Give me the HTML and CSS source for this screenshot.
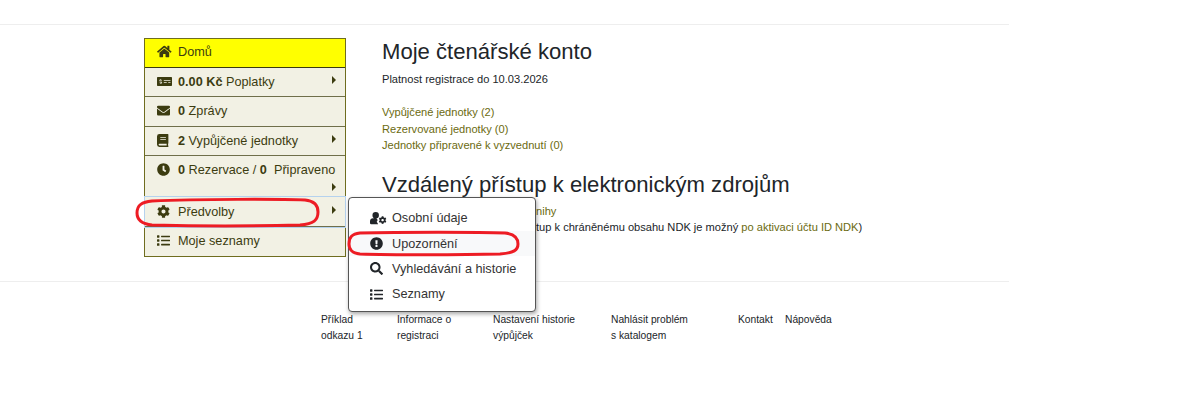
FILE: index.html
```html
<!DOCTYPE html>
<html lang="cs">
<head>
<meta charset="utf-8">
<title>Moje čtenářské konto</title>
<link rel="stylesheet" href="styles.css">
</head>
<body>
<div class="page">
  <hr class="rule top-rule">
  <main class="main">
    <nav class="side">
      <a class="item active"><svg class="ic" viewBox="0 0 576 512" preserveAspectRatio="xMinYMid meet"><path d="M280.400 148.300 96 300.100V464a16 16 0 0 0 16 16l112-.3a16 16 0 0 0 16-16V368a16 16 0 0 1 16-16h64a16 16 0 0 1 16 16v95.600a16 16 0 0 0 16 16.100L464 480a16 16 0 0 0 16-16V300L295.700 148.300a12.200 12.200 0 0 0-15.300 0zM571.600 251.500 488 182.600V44a12 12 0 0 0-12-12h-56a12 12 0 0 0-12 12v72.600L318.500 43a48 48 0 0 0-61 0L4.300 251.500a12 12 0 0 0-1.600 16.900l25.500 31a12 12 0 0 0 16.900 1.600l235.200-193.700a12.200 12.200 0 0 1 15.300 0L530.900 301a12 12 0 0 0 16.900-1.600l25.500-31a12 12 0 0 0-1.700-16.900z"/></svg><span>Domů</span></a>
      <a class="item has-sub"><svg class="ic" viewBox="0 0 640 512" preserveAspectRatio="xMinYMid meet"><path d="M608 64H32A32 32 0 0 0 0 96v320a32 32 0 0 0 32 32h576a32 32 0 0 0 32-32V96a32 32 0 0 0-32-32zM176 327.900V344a8 8 0 0 1-8 8h-16a8 8 0 0 1-8-8v-16.300a57 57 0 0 1-31.400-11.400 8 8 0 0 1-.6-12.100l11.800-11.200a8.200 8.200 0 0 1 10.100-.7 24 24 0 0 0 12.800 3.700h28.100c6.500 0 11.800-5.900 11.800-13.200 0-6-3.600-11.200-8.800-12.800l-45-13.500c-18.600-5.600-31.600-23.400-31.600-43.400 0-24.500 19-44.400 42.600-45V168a8 8 0 0 1 8-8h16a8 8 0 0 1 8 8v16.300a57 57 0 0 1 31.400 11.400 8 8 0 0 1 .6 12.100l-11.800 11.200a8.200 8.200 0 0 1-10.100.7 24 24 0 0 0-12.800-3.700h-28.100c-6.500 0-11.800 5.900-11.800 13.200 0 6 3.600 11.200 8.800 12.800l45 13.500c18.600 5.600 31.600 23.400 31.600 43.400 0 24.500-19 44.400-42.600 45zM416 312a8 8 0 0 1-8 8H296a8 8 0 0 1-8-8v-16a8 8 0 0 1 8-8h112a8 8 0 0 1 8 8zm160 0a8 8 0 0 1-8 8h-80a8 8 0 0 1-8-8v-16a8 8 0 0 1 8-8h80a8 8 0 0 1 8 8zm0-96a8 8 0 0 1-8 8H296a8 8 0 0 1-8-8v-16a8 8 0 0 1 8-8h272a8 8 0 0 1 8 8z"/></svg><span><b>0.00 Kč</b> Poplatky</span></a>
      <a class="item wide"><svg class="ic" viewBox="0 0 512 512" preserveAspectRatio="xMinYMid meet"><path d="M502.300 190.800a6 6 0 0 1 9.700 4.700V400a48 48 0 0 1-48 48H48a48 48 0 0 1-48-48V195.600a6 6 0 0 1 9.700-4.700c22.400 17.400 52.100 39.500 154.100 113.600 21.100 15.400 56.700 47.800 92.200 47.600 35.700.3 72-32.800 92.300-47.600 102-74.100 131.600-96.300 154-113.700zM256 320c23.200.4 56.600-29.200 73.400-41.400 132.700-96.300 142.800-104.700 173.400-128.700a24 24 0 0 0 9.200-18.900v-19a48 48 0 0 0-48-48H48a48 48 0 0 0-48 48v19a24 24 0 0 0 9.200 18.900c30.600 23.900 40.700 32.400 173.400 128.700 16.800 12.200 50.200 41.800 73.400 41.400z"/></svg><span><b>0</b> Zprávy</span></a>
      <a class="item has-sub"><svg class="ic" viewBox="0 0 448 512" preserveAspectRatio="xMinYMid meet"><path d="M448 360V24a24 24 0 0 0-24-24H96A96 96 0 0 0 0 96v320a96 96 0 0 0 96 96h328a24 24 0 0 0 24-24v-16c0-7.500-3.500-14.300-8.900-18.700-4.200-15.400-4.200-59.300 0-74.700 5.400-4.300 8.900-11.100 8.900-18.600zM128 134a6 6 0 0 1 6-6h212a6 6 0 0 1 6 6v20a6 6 0 0 1-6 6H134a6 6 0 0 1-6-6zm0 64a6 6 0 0 1 6-6h212a6 6 0 0 1 6 6v20a6 6 0 0 1-6 6H134a6 6 0 0 1-6-6zm253.400 250H96a32 32 0 0 1 0-64h285.400c-1.900 17.100-1.900 46.900 0 64z"/></svg><span><b>2</b> Vypůjčené jednotky</span></a>
      <a class="item tall has-sub"><svg class="ic" viewBox="0 0 512 512" preserveAspectRatio="xMinYMid meet"><path d="M256 8C119 8 8 119 8 256s111 248 248 248 248-111 248-248S393 8 256 8zm57.100 350.100L224.900 294a12 12 0 0 1-4.900-9.700V116a12 12 0 0 1 12-12h48a12 12 0 0 1 12 12v137.700l63.500 46.200a12 12 0 0 1 2.600 16.800l-28.200 38.800a12.100 12.100 0 0 1-16.800 2.600z"/></svg><span><b>0</b> Rezervace / <b>0</b>&nbsp; Připraveno</span></a>
      <a class="item wide has-sub focus"><svg class="ic" viewBox="0 0 512 512" preserveAspectRatio="xMinYMid meet"><path d="M487.400 315.700l-42.600-24.600c4.300-23.200 4.300-47 0-70.200l42.600-24.600c4.900-2.800 7.100-8.600 5.500-14-11.100-35.600-30-67.800-54.700-94.600-3.800-4.100-10-5.100-14.800-2.300L380.800 110c-17.900-15.400-38.500-27.300-60.800-35.100V25.800c0-5.600-3.900-10.500-9.400-11.700-36.700-8.200-74.300-7.800-109.200 0-5.500 1.200-9.400 6.100-9.400 11.700V75c-22.200 7.900-42.800 19.800-60.800 35.100L88.700 85.500c-4.900-2.800-11-1.900-14.800 2.300-24.700 26.700-43.600 58.900-54.700 94.600-1.700 5.400.6 11.200 5.500 14L67.300 221c-4.300 23.200-4.300 47 0 70.200l-42.600 24.600c-4.900 2.800-7.100 8.600-5.500 14 11.100 35.600 30 67.800 54.700 94.600 3.800 4.100 10 5.100 14.800 2.300l42.600-24.600c17.900 15.400 38.500 27.300 60.800 35.100v49.200c0 5.600 3.900 10.500 9.400 11.700 36.700 8.200 74.300 7.800 109.200 0 5.500-1.200 9.400-6.100 9.400-11.700v-49.200c22.200-7.900 42.800-19.800 60.800-35.100l42.600 24.600c4.900 2.800 11 1.900 14.800-2.300 24.700-26.700 43.600-58.900 54.700-94.600 1.500-5.500-.7-11.300-5.600-14.100zM256 336c-44.100 0-80-35.900-80-80s35.900-80 80-80 80 35.900 80 80-35.900 80-80 80z"/></svg><span>Předvolby</span></a>
      <a class="item"><svg class="ic" viewBox="0 0 512 512" preserveAspectRatio="xMinYMid meet"><path d="M80 368H16a16 16 0 0 0-16 16v64a16 16 0 0 0 16 16h64a16 16 0 0 0 16-16v-64a16 16 0 0 0-16-16zm0-320H16A16 16 0 0 0 0 64v64a16 16 0 0 0 16 16h64a16 16 0 0 0 16-16V64a16 16 0 0 0-16-16zm0 160H16a16 16 0 0 0-16 16v64a16 16 0 0 0 16 16h64a16 16 0 0 0 16-16v-64a16 16 0 0 0-16-16zm416 176H176a16 16 0 0 0-16 16v32a16 16 0 0 0 16 16h320a16 16 0 0 0 16-16v-32a16 16 0 0 0-16-16zm0-320H176a16 16 0 0 0-16 16v32a16 16 0 0 0 16 16h320a16 16 0 0 0 16-16V80a16 16 0 0 0-16-16zm0 160H176a16 16 0 0 0-16 16v32a16 16 0 0 0 16 16h320a16 16 0 0 0 16-16v-32a16 16 0 0 0-16-16z"/></svg><span>Moje seznamy</span></a>
    </nav>
    <section class="content">
      <h1>Moje čtenářské konto</h1>
      <p class="valid">Platnost registrace do 10.03.2026</p>
      <ul class="links">
        <li><a>Vypůjčené jednotky (2)</a></li>
        <li><a>Rezervované jednotky (0)</a></li>
        <li><a>Jednotky připravené k vyzvednutí (0)</a></li>
      </ul>
      <h1 class="second">Vzdálený přístup k elektronickým zdrojům</h1>
      <ul class="links remote">
        <li><a>nihy</a></li>
        <li>tup k chráněnému obsahu NDK je možný <a>po aktivaci účtu ID NDK</a>)</li>
      </ul>
    </section>
  </main>
  <hr class="rule foot-rule">
  <footer class="foot">
    <a class="f1">Příklad<br>odkazu 1</a>
    <a class="f2">Informace o<br>registraci</a>
    <a class="f3">Nastavení historie<br>výpůjček</a>
    <a class="f4">Nahlásit problém<br>s katalogem</a>
    <a class="f5">Kontakt</a>
    <a class="f6">Nápověda</a>
  </footer>

  <div class="menu">
    <a class="mi"><svg class="mic" viewBox="0 0 640 512" preserveAspectRatio="xMinYMid meet"><path d="M224 256a128 128 0 1 0 0-256 128 128 0 0 0 0 256zM610.500 341.300c2.600-14.100 2.600-28.500 0-42.600l25.800-14.900c3-1.700 4.300-5.200 3.300-8.500-6.700-21.600-18.200-41.200-33.200-57.400-2.300-2.500-6-3.100-9-1.400l-25.800 14.900c-10.900-9.300-23.400-16.500-36.900-21.300v-29.800c0-3.400-2.400-6.400-5.700-7.100-22.300-5-45-4.800-66.200 0-3.300.7-5.700 3.700-5.700 7.100v29.800c-13.500 4.800-26 12-36.900 21.300l-25.800-14.900c-2.900-1.700-6.700-1.100-9 1.400-15 16.200-26.500 35.800-33.200 57.400-1 3.300.4 6.800 3.300 8.500l25.800 14.900c-2.600 14.100-2.600 28.500 0 42.600l-25.800 14.900c-3 1.700-4.300 5.200-3.300 8.500 6.700 21.600 18.200 41.100 33.200 57.400 2.300 2.500 6 3.100 9 1.400l25.800-14.900c10.900 9.300 23.400 16.500 36.900 21.300v29.800c0 3.400 2.400 6.400 5.700 7.100 22.300 5 45 4.800 66.200 0 3.300-.7 5.700-3.700 5.700-7.100v-29.800c13.500-4.800 26-12 36.900-21.300l25.800 14.900c2.900 1.700 6.700 1.100 9-1.400 15-16.200 26.500-35.800 33.200-57.400 1-3.300-.4-6.800-3.300-8.500zM496 368.500c-26.800 0-48.500-21.800-48.500-48.500s21.800-48.500 48.500-48.500 48.500 21.800 48.500 48.500-21.700 48.500-48.500 48.500zM317.400 480c-1.300-2.200-2.400-4.600-3.200-7.100-8.100-26.100-22-50.500-40.200-70.200-8.600-9.300-9.500-23.100-3.500-33.900L294 352c-4.700-14.100-4.700-49.900 0-64l-12-7c-10.200-5.900-16.800-16.200-17.500-27.800-12.700-6.200-26.800-9.200-40.500-9.200h-16.700a174 174 0 0 1-74.600 0H116C52 244 0 296 0 360v72a48 48 0 0 0 48 48z"/></svg><span>Osobní údaje</span></a>
    <a class="mi hover"><svg class="mic" viewBox="0 0 512 512" preserveAspectRatio="xMinYMid meet"><path d="M504 256c0 137-111 248-248 248S8 393 8 256 119 8 256 8s248 111 248 248zm-248 50a46 46 0 1 0 0 92 46 46 0 0 0 0-92zm-43.700-165.400 7.400 136a12 12 0 0 0 12 11.400h48.600a12 12 0 0 0 12-11.400l7.400-136a12 12 0 0 0-12-12.600h-63.400a12 12 0 0 0-12 12.600z"/></svg><span>Upozornění</span></a>
    <a class="mi"><svg class="mic" viewBox="0 0 512 512" preserveAspectRatio="xMinYMid meet"><path d="M505 442.700 405.300 343c-4.500-4.500-10.600-7-17-7H372c27.600-35.300 44-79.700 44-128C416 93.100 322.900 0 208 0S0 93.100 0 208s93.100 208 208 208c48.300 0 92.700-16.400 128-44v16.300c0 6.400 2.500 12.500 7 17l99.700 99.700a23.900 23.900 0 0 0 33.900 0l28.300-28.300a24.100 24.100 0 0 0 .1-34zM208 336c-70.700 0-128-57.200-128-128 0-70.700 57.200-128 128-128 70.700 0 128 57.200 128 128 0 70.700-57.200 128-128 128z"/></svg><span>Vyhledávání a historie</span></a>
    <a class="mi"><svg class="mic" viewBox="0 0 512 512" preserveAspectRatio="xMinYMid meet"><path d="M80 368H16a16 16 0 0 0-16 16v64a16 16 0 0 0 16 16h64a16 16 0 0 0 16-16v-64a16 16 0 0 0-16-16zm0-320H16A16 16 0 0 0 0 64v64a16 16 0 0 0 16 16h64a16 16 0 0 0 16-16V64a16 16 0 0 0-16-16zm0 160H16a16 16 0 0 0-16 16v64a16 16 0 0 0 16 16h64a16 16 0 0 0 16-16v-64a16 16 0 0 0-16-16zm416 176H176a16 16 0 0 0-16 16v32a16 16 0 0 0 16 16h320a16 16 0 0 0 16-16v-32a16 16 0 0 0-16-16zm0-320H176a16 16 0 0 0-16 16v32a16 16 0 0 0 16 16h320a16 16 0 0 0 16-16V80a16 16 0 0 0-16-16zm0 160H176a16 16 0 0 0-16 16v32a16 16 0 0 0 16 16h320a16 16 0 0 0 16-16v-32a16 16 0 0 0-16-16z"/></svg><span>Seznamy</span></a>
  </div>

  <svg class="marks" viewBox="0 0 1200 418" aria-hidden="true">
    <path d="M152 201 C200 199 280 199 305 200 C315 201 318 206 318 212 C318 220 314 224 300 225 C260 226 190 226 152 225 C142 224 137 220 137 213 C137 205 142 202 152 201 Z"/>
    <path d="M360 233 C400 232 480 232 505 233 C515 234 518 238 518 244 C518 250 514 253 500 254 C460 255 390 255 360 254 C352 253 349 250 349 244 C349 237 352 234 360 233 Z"/>
  </svg>
</div>
</body>
</html>
```
FILE: styles.css
```css
* { box-sizing: border-box; }
html, body { margin: 0; padding: 0; background: #fff; }
body { font-family: "Liberation Sans", Arial, sans-serif; font-size: 11.100px; color: #212529; }
.page { position: relative; width: 1200px; height: 418px; overflow: hidden; padding-top: 24px; }
.rule { border: 0; height: 1px; width: 1009px; margin: 0; background: #eee; }
.main { display: flex; padding: 13px 0 0 144px; height: 256px; }
.side { width: 202px; height: 219px; display: flex; flex-direction: column; border: 1px solid #6f6d1f; background: #f2f1e4; }
.item { position: relative; display: flex; align-items: flex-start; height: 29px; padding: 6px 0 0 12px; font-size: 12.700px; line-height: 16px; color: #3c3c10; border-bottom: 1px solid #6f6f4a; }
.item:last-child { border-bottom: 0; }
.item.active { background: #ff0; padding-top: 5px; border-bottom-color: #3c3c10; }
.item.wide { height: 30px; }
.item.tall { height: 41px; }
.item.focus { padding-top: 7px; outline: 1px solid #b5d2ee; }
.ic { width: 15px; height: 13px; flex: none; margin: 1px 6px 0 0; fill: #3c3c10; }
.item.has-sub::after { content: ""; position: absolute; right: 9px; top: 8px; border-left: 4px solid #3c3c10; border-top: 4px solid transparent; border-bottom: 4px solid transparent; }
.item.focus::after { top: 9px; }
.item.tall::after { top: 27px; }
.content { margin-left: 36px; width: 560px; }
h1 { font-size: 22.100px; line-height: 26px; font-weight: 400; margin: 1px 0 0; color: #212529; }
.valid { margin: 6px 0 0; line-height: 16px; }
.links { list-style: none; margin: 17px 0 0; padding: 0; line-height: 16.500px; }
.links a { color: #6b6a10; }
h1.second { margin-top: 18px; }
.links.remote { margin-top: 5px; line-height: 16px; padding-left: 154px; }
.foot { display: flex; padding: 30px 0 0 321px; font-size: 10.250px; line-height: 16px; }
.foot a { display: block; color: #212529; }
.f1 { width: 76px; } .f2 { width: 96px; } .f3 { width: 118px; } .f4 { width: 127px; } .f5 { width: 47px; }
.menu { position: absolute; left: 348px; top: 197px; width: 188px; height: 115px; display: flex; flex-direction: column; padding: 7.500px 0 0; background: #fff; border: 1px solid #555; border-radius: 4px; box-shadow: 1px 2px 4px rgba(0,0,0,.35); }
.mi { display: flex; align-items: center; height: 25.400px; padding-left: 21px; font-size: 12.700px; color: #333; }
.mi.hover { background: #f8f9fa; }
.mic { width: 17px; height: 13px; flex: none; margin-right: 5px; fill: #212529; }
.marks { position: absolute; left: 0; top: 0; width: 1200px; height: 418px; pointer-events: none; }
.marks path { fill: none; stroke: #ed1c24; stroke-width: 3; }
```
